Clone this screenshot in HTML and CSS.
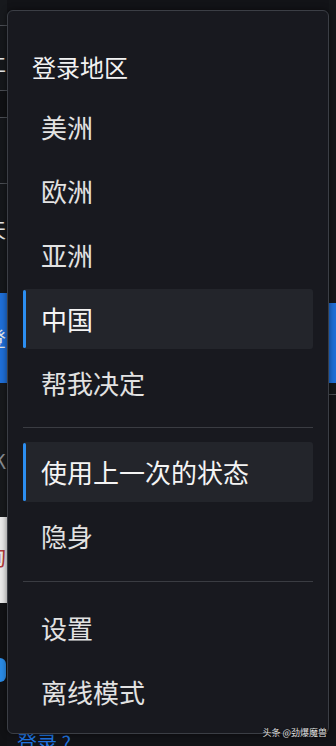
FILE: index.html
```html
<!DOCTYPE html>
<html lang="zh-CN">
<head>
<meta charset="utf-8">
<title>登录地区</title>
<link rel="stylesheet" href="styles.css">
</head>
<body>
<div class="app">
  <div class="strip strip-left">
    <div class="seg s1"></div>
    <div class="rule"></div>
    <div class="seg s2"><span class="peek peek-w g1">仁</span></div>
    <div class="rule"></div>
    <div class="seg s3"></div>
    <div class="rule"></div>
    <div class="seg s4"></div>
    <div class="rule"></div>
    <div class="seg s5"><span class="peek peek-w g2">天</span></div>
    <div class="seg s6 blue"><span class="peek peek-w g3">登</span></div>
    <div class="seg s7"><span class="peek peek-g g4">K</span></div>
    <div class="seg s8 light"><span class="peek peek-r g5">询</span></div>
    <div class="seg s9"><span class="dot"></span></div>
  </div>
  <div class="center">
    <div class="footer-link"><span class="footer-text">登录 ?</span></div>
  </div>
  <div class="strip strip-right">
    <div class="seg r1"></div>
    <div class="seg r2 blue"></div>
    <div class="seg r3"></div>
    <div class="rule"></div>
    <div class="seg r4"></div>
  </div>
</div>

<div class="menu">
  <div class="menu-title">登录地区</div>
  <div class="group">
    <div class="item">美洲</div>
    <div class="item">欧洲</div>
    <div class="item">亚洲</div>
    <div class="item active">中国</div>
    <div class="item">帮我决定</div>
  </div>
  <div class="sep sep-a"></div>
  <div class="group">
    <div class="item active">使用上一次的状态</div>
    <div class="item">隐身</div>
  </div>
  <div class="sep sep-b"></div>
  <div class="group">
    <div class="item">设置</div>
    <div class="item">离线模式</div>
  </div>
</div>

<div class="watermark">头条 @劲爆魔兽</div>
</body>
</html>
```

FILE: styles.css
```css
* { box-sizing: border-box; }

html, body {
  margin: 0;
  padding: 0;
}

body {
  width: 336px;
  height: 746px;
  overflow: hidden;
  background: #121317;
  font-family: "Noto Sans CJK SC", "Noto Sans", sans-serif;
  position: relative;
}

.app {
  display: flex;
  width: 336px;
  height: 746px;
}

.strip {
  display: flex;
  flex-direction: column;
  width: 7px;
  flex: none;
  overflow: hidden;
}

.seg {
  position: relative;
  overflow: hidden;
  background: #15171b;
}

.rule {
  height: 1px;
  background: #4a4d53;
  flex: none;
}

.s1 { height: 25px; background: #17191d; }
.s2 { height: 64px; }
.s3 { height: 26px; background: #101114; }
.s4 { height: 65px; }
.s5 { height: 109px; }
.s6 { height: 90px; }
.s7 { height: 134px; background: #17191c; }
.s8 { height: 86px; }
.s9 { flex: 1; background: #111215; }

.blue { background: #1f6fd8; }
.light { background: #e9e9e9; }

.peek {
  position: absolute;
  right: 1px;
  font-size: 20px;
  line-height: 20px;
  white-space: nowrap;
}
.peek-w { color: #e8e8e8; }
.peek-g { color: #8a8d92; }
.peek-r { color: #b23a3a; font-size: 22px; }

.g1 { top: 28px; }
.g2 { top: 36px; }
.g3 { top: 36px; }
.g4 { top: 68px; }
.g5 { top: 28px; }

.dot {
  position: absolute;
  left: -6px;
  top: 55px;
  width: 12px;
  height: 24px;
  border-radius: 6px;
  background: #2a8be6;
}

.center {
  flex: 1;
  display: flex;
  flex-direction: column;
  justify-content: flex-end;
}

.footer-link {
  height: 12px;
  overflow: hidden;
  padding-left: 10px;
}

.footer-text {
  display: block;
  color: #1f72de;
  font-size: 20px;
  line-height: 20px;
  margin-top: -1px;
}

.r1 { height: 303px; background: #141619; }
.r2 { height: 80px; }
.r3 { height: 11px; background: #141619; }
.r4 { flex: 1; background: #121317; }

/* overlay menu */
.menu {
  position: absolute;
  left: 7px;
  top: 10px;
  width: 322px;
  height: 724px;
  background: #18191f;
  border: 1px solid #3b3e45;
  border-radius: 6px;
  padding: 25px 15px 13px 15px;
  display: flex;
  flex-direction: column;
  box-shadow: 0 0 6px rgba(0, 0, 0, 0.5);
}

.menu-title {
  height: 61px;
  line-height: 61px;
  padding-left: 9px;
  font-size: 24px;
  color: #f2f2f2;
  flex: none;
}

.group {
  display: flex;
  flex-direction: column;
  gap: 4px;
}

.item {
  position: relative;
  height: 60px;
  line-height: 60px;
  padding-left: 18px;
  font-size: 26px;
  color: #e2e2e2;
  border-radius: 3px;
  white-space: nowrap;
}

.item.active {
  background: #23252b;
  color: #f4f4f4;
}

.item.active::before {
  content: "";
  position: absolute;
  left: 0;
  top: 1px;
  bottom: 1px;
  width: 3px;
  border-radius: 2px;
  background: #2c8ef0;
}

.sep {
  height: 1px;
  background: #3a3c42;
  flex: none;
}
.sep-a { margin: 14px 0 14px; }
.sep-b { margin: 15px 0 16px; }

.watermark {
  position: absolute;
  right: 9px;
  top: 727px;
  font-size: 9px;
  line-height: 12px;
  color: #e0e0e0;
  text-shadow: 0 0 2px #000;
  white-space: nowrap;
}
```
